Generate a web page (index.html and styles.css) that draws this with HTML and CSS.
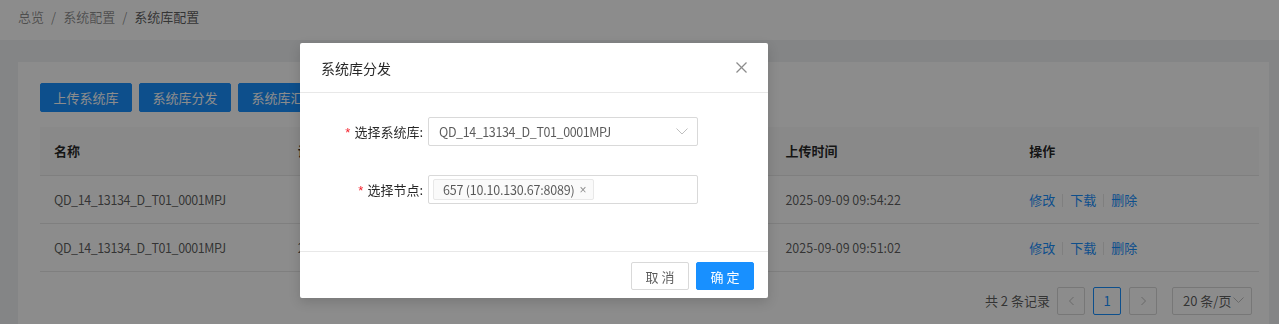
FILE: index.html
```html
<!DOCTYPE html>
<html lang="zh-CN">
<head>
<meta charset="utf-8">
<title>系统库配置</title>
<link rel="stylesheet" href="styles.css">
</head>
<body>
<header class="topbar">
  <nav class="crumbs">
    <span class="crumb">总览</span><span class="sep">/</span><span class="crumb">系统配置</span><span class="sep">/</span><span class="crumb current">系统库配置</span>
  </nav>
</header>
<main class="content">
  <section class="card">
    <div class="toolbar">
      <button class="btn primary">上传系统库</button>
      <button class="btn primary">系统库分发</button>
      <button class="btn primary">系统库汇总</button>
    </div>
    <table class="grid">
      <thead>
        <tr><th>名称</th><th>说明</th><th></th><th>上传时间</th><th>操作</th></tr>
      </thead>
      <tbody>
        <tr>
          <td><span class="code">QD_14_13134_D_T01_0001MPJ</span></td><td></td><td></td><td><span class="num">2025-09-09 09:54:22</span></td>
          <td><a class="op">修改</a><span class="vdiv"></span><a class="op">下载</a><span class="vdiv"></span><a class="op">删除</a></td>
        </tr>
        <tr>
          <td><span class="code">QD_14_13134_D_T01_0001MPJ</span></td><td><span class="num">2025</span></td><td></td><td><span class="num">2025-09-09 09:51:02</span></td>
          <td><a class="op">修改</a><span class="vdiv"></span><a class="op">下载</a><span class="vdiv"></span><a class="op">删除</a></td>
        </tr>
      </tbody>
    </table>
    <div class="pager">
      <span class="total">共 2 条记录</span>
      <span class="pg-item disabled"><svg width="7" height="10" viewBox="0 0 7 10"><polyline points="5.5,1 1.5,5 5.5,9" fill="none" stroke="#bfbfbf" stroke-width="1"/></svg></span>
      <span class="pg-item active">1</span>
      <span class="pg-item disabled"><svg width="7" height="10" viewBox="0 0 7 10"><polyline points="1.5,1 5.5,5 1.5,9" fill="none" stroke="#bfbfbf" stroke-width="1"/></svg></span>
      <span class="pg-size">20 条/页<svg width="11" height="7" viewBox="0 0 11 7"><polyline points="0.5,0.5 5.5,5.5 10.5,0.5" fill="none" stroke="#bfbfbf" stroke-width="1"/></svg></span>
    </div>
  </section>
</main>

<div class="mask"></div>

<div class="modal" role="dialog">
  <div class="modal-head">
    <span class="modal-title">系统库分发</span>
    <svg class="close" width="11" height="11" viewBox="0 0 11 11"><line x1="0.5" y1="0.5" x2="10.5" y2="10.5" stroke="#8c8c8c" stroke-width="1.2"/><line x1="10.5" y1="0.5" x2="0.5" y2="10.5" stroke="#8c8c8c" stroke-width="1.2"/></svg>
  </div>
  <div class="modal-body">
    <div class="form-row">
      <label class="form-label"><span class="req">*</span>选择系统库:</label>
      <div class="select">
        <span class="code">QD_14_13134_D_T01_0001MPJ</span>
        <svg class="arrow" width="12" height="7" viewBox="0 0 12 7"><polyline points="0.5,0.5 6,6 11.5,0.5" fill="none" stroke="#bfbfbf" stroke-width="1"/></svg>
      </div>
    </div>
    <div class="form-row">
      <label class="form-label"><span class="req">*</span>选择节点:</label>
      <div class="select multi">
        <span class="tag"><span class="tag-text">657 (10.10.130.67:8089)</span><span class="tag-x">×</span></span>
      </div>
    </div>
  </div>
  <div class="modal-foot">
    <button class="btn ghost">取 消</button>
    <button class="btn primary">确 定</button>
  </div>
</div>
</body>
</html>
```

FILE: styles.css
```css
html, body {
  margin: 0;
  padding: 0;
}

body {
  background: #f0f2f5;
  font-family: "Noto Sans CJK SC", "Noto Sans", sans-serif;
  font-size: 13px;
  color: rgba(0, 0, 0, 0.65);
  overflow: hidden;
}

.code {
  font-size: 12.5px;
  letter-spacing: -0.4px;
}

.num {
  font-size: 12.5px;
}

.topbar {
  height: 40px;
  box-sizing: border-box;
  background: #fff;
  padding: 8px 18px 0;
  line-height: 18px;
}

.crumb {
  color: rgba(0, 0, 0, 0.45);
}

.crumb.current {
  color: rgba(0, 0, 0, 0.65);
}

.sep {
  margin: 0 7px;
  color: rgba(0, 0, 0, 0.45);
}

.content {
  padding: 22px 10px 0 18px;
}

.card {
  background: #fff;
  padding: 21px 10px 24px 22px;
}

.toolbar {
  display: flex;
  gap: 7px;
  margin-bottom: 15px;
}

.btn {
  height: 29px;
  box-sizing: border-box;
  border-radius: 2px;
  font-family: inherit;
  font-size: 13px;
  line-height: 1;
  cursor: pointer;
}

.btn.primary {
  background: #1890ff;
  border: 1px solid #1890ff;
  color: #fff;
  padding: 0 12.5px;
}

.grid {
  width: 100%;
  border-collapse: collapse;
  table-layout: fixed;
}

.grid th,
.grid td {
  height: 48px;
  box-sizing: border-box;
  padding: 0 14px;
  text-align: left;
  border-bottom: 1px solid #e8e8e8;
  white-space: nowrap;
  overflow: hidden;
}

.grid th {
  background: #fafafa;
  color: rgba(0, 0, 0, 0.85);
  font-weight: 700;
}

.grid td {
  color: rgba(0, 0, 0, 0.65);
}

.op {
  color: #1890ff;
  cursor: pointer;
}

.vdiv {
  display: inline-block;
  width: 1px;
  height: 13px;
  background: #e8e8e8;
  margin: 0 7px;
  vertical-align: -2px;
}

.pager {
  display: flex;
  justify-content: flex-end;
  align-items: center;
  gap: 8px;
  margin-top: 15px;
  padding-right: 7px;
}

.total {
  margin-right: -1px;
  color: rgba(0, 0, 0, 0.65);
}

.pg-item {
  width: 28px;
  height: 28px;
  box-sizing: border-box;
  border: 1px solid #d9d9d9;
  border-radius: 2px;
  display: flex;
  align-items: center;
  justify-content: center;
  color: rgba(0, 0, 0, 0.65);
}

.pg-item.active {
  border-color: #1890ff;
  color: #1890ff;
}

.pg-size {
  margin-left: 7px;
  width: 80px;
  height: 28px;
  box-sizing: border-box;
  border: 1px solid #d9d9d9;
  border-radius: 2px;
  display: flex;
  align-items: center;
  padding-left: 10px;
  gap: 2px;
  color: rgba(0, 0, 0, 0.65);
}

.mask {
  position: fixed;
  inset: 0;
  background: rgba(0, 0, 0, 0.45);
}

.modal {
  position: fixed;
  left: 300px;
  top: 43px;
  width: 468px;
  background: #fff;
  border-radius: 2px;
  box-shadow: 0 4px 12px rgba(0, 0, 0, 0.15);
}

.modal-head {
  height: 50px;
  box-sizing: border-box;
  border-bottom: 1px solid #e8e8e8;
  display: flex;
  align-items: center;
  justify-content: space-between;
  padding: 0 21px 0 21px;
}

.modal-title {
  font-size: 14px;
  color: rgba(0, 0, 0, 0.85);
}

.modal-body {
  padding: 24px 0 47px;
}

.form-row {
  display: flex;
  align-items: center;
}

.form-row + .form-row {
  margin-top: 29px;
}

.form-label {
  width: 128px;
  box-sizing: border-box;
  text-align: right;
  padding-right: 5px;
  color: rgba(0, 0, 0, 0.85);
}

.req {
  color: #f5222d;
  margin-right: 4px;
  font-family: "Liberation Sans", sans-serif;
}

.select {
  width: 270px;
  height: 29px;
  box-sizing: border-box;
  border: 1px solid #d9d9d9;
  border-radius: 2px;
  display: flex;
  align-items: center;
  justify-content: space-between;
  padding: 0 9px 0 10px;
  color: rgba(0, 0, 0, 0.65);
}

.select.multi {
  padding: 0 4px;
}

.tag {
  height: 21px;
  box-sizing: border-box;
  background: #fafafa;
  border: 1px solid #e8e8e8;
  border-radius: 2px;
  display: inline-flex;
  align-items: center;
  padding: 0 6px 0 9px;
}

.tag-text {
  font-size: 12.5px;
  letter-spacing: -0.2px;
}

.tag-x {
  margin-left: 5px;
  font-family: "Liberation Sans", sans-serif;
  font-size: 12px;
  color: rgba(0, 0, 0, 0.45);
}

.modal-foot {
  border-top: 1px solid #e8e8e8;
  padding: 10px 14px 8px;
  display: flex;
  justify-content: flex-end;
  gap: 7px;
}

.modal-foot .btn {
  height: 28px;
  width: 58px;
  padding: 0;
}

.btn.ghost {
  background: #fff;
  border: 1px solid #d9d9d9;
  color: rgba(0, 0, 0, 0.65);
}
```
